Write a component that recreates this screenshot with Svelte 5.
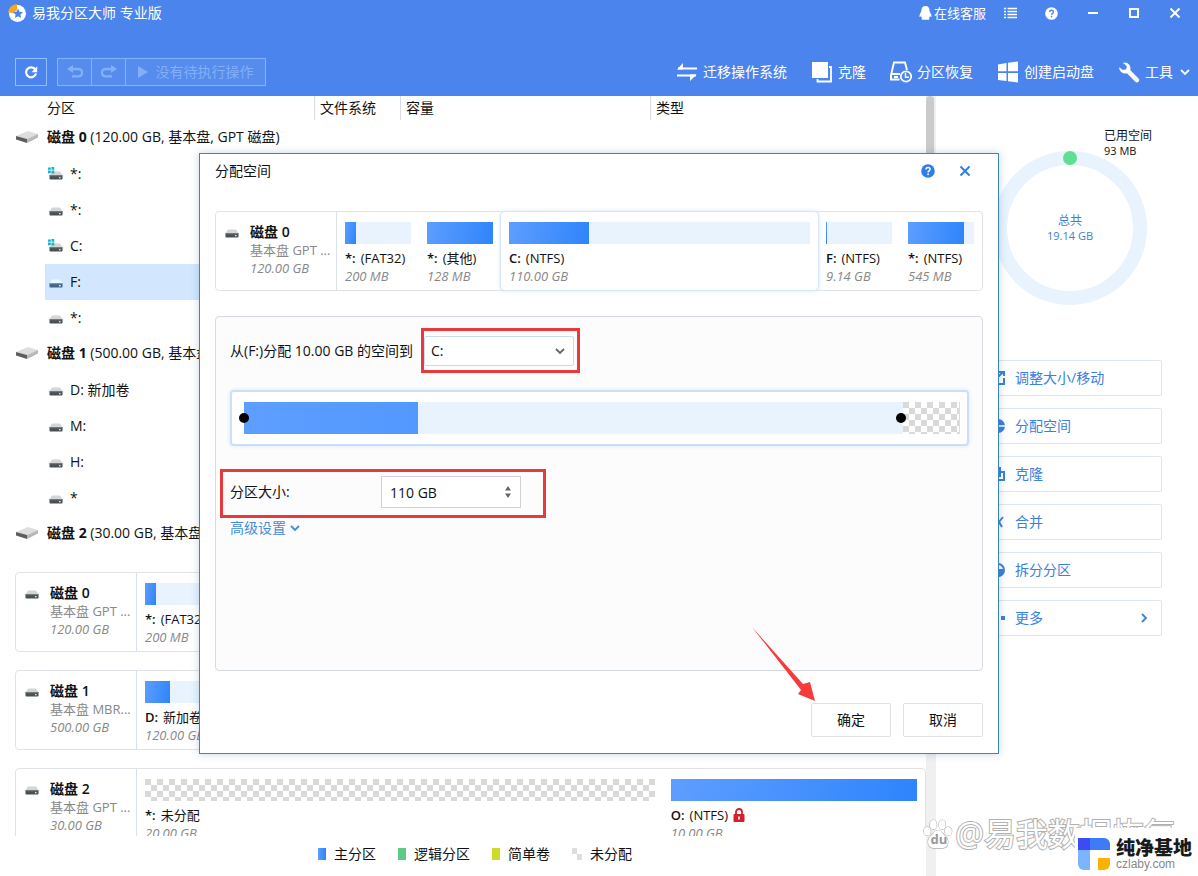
<script lang="ts">
  type Segment = {
    letter: string;
    fs: string;
    size: string;
    used: number;
    grow?: number;
    selected?: boolean;
    unallocated?: boolean;
    locked?: boolean;
  };
  type Disk = { id: number; kind: string; size: string; segments: Segment[] };
  type TreeRow = { label: string; disk?: string; system?: boolean; active?: boolean };

  const tree: TreeRow[] = [
    { disk: '磁盘 0', label: '(120.00 GB, 基本盘, GPT 磁盘)' },
    { label: '*:', system: true },
    { label: '*:' },
    { label: 'C:', system: true },
    { label: 'F:', active: true },
    { label: '*:' },
    { disk: '磁盘 1', label: '(500.00 GB, 基本盘, MBR 磁盘)' },
    { label: 'D: 新加卷' },
    { label: 'M:' },
    { label: 'H:' },
    { label: '*' },
    { disk: '磁盘 2', label: '(30.00 GB, 基本盘, GPT 磁盘)' }
  ];

  const disk0: Disk = {
    id: 0,
    kind: '基本盘 GPT ...',
    size: '120.00 GB',
    segments: [
      { letter: '*:', fs: '(FAT32)', size: '200 MB', used: 16 },
      { letter: '*:', fs: '(其他)', size: '128 MB', used: 100 },
      { letter: 'C:', fs: '(NTFS)', size: '110.00 GB', used: 26.5, grow: 1, selected: true },
      { letter: 'F:', fs: '(NTFS)', size: '9.14 GB', used: 1.5 },
      { letter: '*:', fs: '(NTFS)', size: '545 MB', used: 85 }
    ]
  };

  const disks: Disk[] = [
    { ...disk0, segments: disk0.segments.map((s) => ({ ...s, selected: false })) },
    {
      id: 1,
      kind: '基本盘 MBR...',
      size: '500.00 GB',
      segments: [
        { letter: 'D:', fs: '新加卷 (NTFS)', size: '120.00 GB', used: 10, grow: 1 },
        { letter: 'M:', fs: '(NTFS)', size: '180.00 GB', used: 8, grow: 1 },
        { letter: 'H:', fs: '(NTFS)', size: '199.00 GB', used: 8, grow: 1 }
      ]
    },
    {
      id: 2,
      kind: '基本盘 GPT ...',
      size: '30.00 GB',
      segments: [
        { letter: '*:', fs: '未分配', size: '20.00 GB', used: 0, grow: 2.07, unallocated: true },
        { letter: 'O:', fs: '(NTFS)', size: '10.00 GB', used: 100, grow: 1, locked: true }
      ]
    }
  ];

  const tools = [
    { icon: 'migrate', label: '迁移操作系统' },
    { icon: 'clone', label: '克隆' },
    { icon: 'recover', label: '分区恢复' },
    { icon: 'windows', label: '创建启动盘' },
    { icon: 'wrench', label: '工具' }
  ];

  const actions = [
    { icon: 'resize', label: '调整大小/移动' },
    { icon: 'allocate', label: '分配空间' },
    { icon: 'clone', label: '克隆' },
    { icon: 'merge', label: '合并' },
    { icon: 'split', label: '拆分分区' },
    { icon: 'more', label: '更多' }
  ];

  const legend = [
    { type: 'primary', label: '主分区' },
    { type: 'logical', label: '逻辑分区' },
    { type: 'simple', label: '简单卷' },
    { type: 'free', label: '未分配' }
  ];

  let target = 'C:';
  let size = '110 GB';
</script>

{#snippet drive(system: boolean)}
  <svg class="drive" width="16" height="16" viewBox="0 0 16 16" aria-hidden="true">
    <path d="M4 5.500h8l2.500 4H1.500z" fill="#d3d5d6" />
    <rect x="1.500" y="9" width="13" height="4.500" rx="0.800" fill="#4a5154" />
    <rect x="1.500" y="9" width="13" height="1.200" fill="#737a7c" />
    <rect x="11" y="11" width="1.500" height="1.300" fill="#e4f0e8" />
    {#if system}
      <path d="M0 1.500h2.800v2.300H0zM3.500 1h2.800v2.800H3.500zM0 4.600h2.800v2.600H0zM3.500 4.600h2.800v2.800H3.500z" fill="#18b4cc" />
    {/if}
  </svg>
{/snippet}

{#snippet help(box: number)}
  <svg width={box} height={box} viewBox="0 0 14 14" aria-hidden="true">
    <circle cx="7" cy="7" r="6.800" fill="currentColor" />
    <path d="M5 5.500C5 2.800 9.100 2.800 9.100 5.300 9.100 6.800 7.100 6.900 7.100 8.400" class="help-stroke" fill="none" stroke-width="1.500" />
    <rect x="6.300" y="9.500" width="1.600" height="1.600" class="help-dot" />
  </svg>
{/snippet}

{#snippet chevron()}
  <svg width="10" height="8" viewBox="0 0 10 8" aria-hidden="true">
    <path d="M1 2l4 4 4-4" fill="none" stroke="currentColor" stroke-width="1.800" />
  </svg>
{/snippet}

{#snippet diskCard(disk: Disk)}
  <article class="disk-card">
    <div class="disk-info">
      {@render drive(false)}
      <div class="disk-text">
        <strong>磁盘 <span>{disk.id}</span></strong>
        <span class="kind">{disk.kind}</span>
        <em>{disk.size}</em>
      </div>
    </div>
    {#each disk.segments as seg}
      <div class="segment" class:selected={seg.selected} style:flex={seg.grow ? `${seg.grow} 1 0` : '0 0 82px'}>
        <div class="bar" class:checker={seg.unallocated}>
          {#if seg.used > 0}<div class="fill" style:width={`${seg.used}%`}></div>{/if}
        </div>
        <div class="seg-label">
          <b>{seg.letter}</b>
          <span>{seg.fs}</span>
          {#if seg.locked}
            <svg width="12" height="14" viewBox="0 0 12 14" aria-hidden="true">
              <path d="M3 7V4a3 3 0 0 1 6 0v3" fill="none" stroke="#d61f2b" stroke-width="1.800" />
              <rect x="0.500" y="6" width="11" height="8" rx="1" fill="#d61f2b" />
              <rect x="5.200" y="8.500" width="1.600" height="3" fill="#fff" />
            </svg>
          {/if}
        </div>
        <em>{seg.size}</em>
      </div>
    {/each}
  </article>
{/snippet}

<div class="app">
  <header>
    <div class="titlebar">
      <svg width="19" height="19" viewBox="0 0 19 19" aria-hidden="true">
        <circle cx="9.500" cy="9.500" r="8.500" fill="#fff" />
        <path d="M0 8.500A9.500 9.500 0 0 1 9 0v6L5.500 9z" fill="#f5a623" />
        <path d="M10 4.500l1.500 3.300 3.500.400-2.600 2.400.700 3.500-3.100-1.800-3.100 1.800.700-3.500L5 8.200l3.500-.400z" fill="#4b84ec" />
      </svg>
      <h1>易我分区大师 专业版</h1>
      <a class="service" href="#service">
        <svg width="13" height="14" viewBox="0 0 13 14" aria-hidden="true">
          <path d="M6.500 0C3.800 0 2.300 2 2.400 4.500 2.400 6 .300 8 .400 10.800c.500.400 1.100-.300 1.500-.900.200.900.700 1.600 1.300 2.100-1 .300-.900 1.800.400 1.800h5.800c1.300 0 1.400-1.500.400-1.800.600-.500 1.100-1.200 1.300-2.100.400.600 1 1.300 1.500.9.100-2.800-2.100-4.800-2.100-6.300C10.600 2 9.200 0 6.500 0z" fill="#fff" />
        </svg>
        在线客服
      </a>
      <div class="win-buttons">
        <button aria-label="菜单">
          <svg width="14" height="12" viewBox="0 0 14 12"><path d="M0 1.500h2M3.500 1.500H13M0 4.500h2M3.500 4.500H13M0 7.500h2M3.500 7.500H13M0 10.500h2M3.500 10.500H13" stroke="#fff" stroke-width="1.500" /></svg>
        </button>
        <button aria-label="帮助">{@render help(13)}</button>
        <button aria-label="最小化">
          <svg width="10" height="10" viewBox="0 0 10 10"><path d="M0 5h10" stroke="#fff" stroke-width="2" /></svg>
        </button>
        <button aria-label="最大化">
          <svg width="10" height="10" viewBox="0 0 10 10"><rect x="1" y="1" width="8" height="8" fill="none" stroke="#fff" stroke-width="2" /></svg>
        </button>
        <button aria-label="关闭">
          <svg width="10" height="10" viewBox="0 0 10 10"><path d="M.500.500l9 9M9.500.500l-9 9" stroke="#fff" stroke-width="2" /></svg>
        </button>
      </div>
    </div>

    <div class="toolbar">
      <button class="refresh" aria-label="刷新">
        <svg width="14" height="14" viewBox="0 0 14 14"><path d="M11.300 4.500A5 5 0 1 0 12 8.500" fill="none" stroke="#fff" stroke-width="2.200" /><path d="M13.200 1.200v6H7.400z" fill="#fff" /></svg>
      </button>
      <div class="history">
        <button aria-label="撤销" disabled>
          <svg width="16" height="14" viewBox="0 0 16 14"><path d="M3 4h8.500a3.700 3.700 0 0 1 0 7.400H5" fill="none" stroke="currentColor" stroke-width="2.400" /><path d="M6 0v8L0 4z" fill="currentColor" /></svg>
        </button>
        <button aria-label="重做" disabled>
          <svg width="16" height="14" viewBox="0 0 16 14"><path d="M13 4H4.500a3.700 3.700 0 0 0 0 7.400H11" fill="none" stroke="currentColor" stroke-width="2.400" /><path d="M10 0v8l6-4z" fill="currentColor" /></svg>
        </button>
        <button class="pending" disabled>
          <svg width="10" height="12" viewBox="0 0 10 12" aria-hidden="true"><path d="M0 0l10 6-10 6z" fill="currentColor" /></svg>
          没有待执行操作
        </button>
      </div>
      <nav>
        {#each tools as tool}
          <button>
            <svg width="22" height="22" viewBox="0 0 22 22" aria-hidden="true">
              {#if tool.icon === 'migrate'}
                <path d="M2 7.500h19M1 14.500h19" stroke="#fff" stroke-width="2" /><path d="M1 8.500L7 2v6.500zM20.500 13.500L14 20v-6.500z" fill="#fff" />
              {:else if tool.icon === 'clone'}
                <path d="M18 6h2v14.500H6.500V18" fill="none" stroke="#fff" stroke-width="1.800" /><rect x="1" y="1" width="16" height="16" fill="#fff" />
              {:else if tool.icon === 'recover'}
                <path d="M9.500 18.500H1V14L4 1.500h11L17 9M1.500 13H10M4 16h4" fill="none" stroke="#fff" stroke-width="1.900" /><circle cx="16" cy="15.500" r="5.200" fill="none" stroke="#fff" stroke-width="1.700" /><path d="M15.500 12v4.200h3.500" fill="none" stroke="#fff" stroke-width="1.400" />
              {:else if tool.icon === 'windows'}
                <path d="M1 3.500L9.500 2v8.200H1zM11 1.800L21 .500v9.700H11zM1 12h8.500v8L1 19zM11 12h10v9.500L11 20.300z" fill="#fff" />
              {:else}
                <path d="M6.500 1.500A5.800 5.800 0 0 1 12.200 9l8.300 8.500a2.200 2.200 0 0 1-3.200 3.200L9 12.200A5.800 5.800 0 0 1 1.300 6.200l3.500 2.900 3.400-.900.600-3.200L5 2z" fill="#fff" />
              {/if}
            </svg>
            <span>{tool.label}</span>
            {#if tool.icon === 'wrench'}<span class="caret">{@render chevron()}</span>{/if}
          </button>
        {/each}
      </nav>
    </div>
  </header>

  <main>
    <div class="left">
      <div class="tree-pane">
        <table>
          <thead>
            <tr><th class="col-name">分区</th><th class="col-fs">文件系统</th><th class="col-size">容量</th><th>类型</th></tr>
          </thead>
          <tbody>
            {#each tree as row}
              <tr>
                <td colspan="4">
                  {#if row.disk}
                    <div class="disk-row">
                      <svg width="22" height="12" viewBox="0 0 22 12" aria-hidden="true">
                        <path d="M0 5L12 0l10 3-11 5.500z" fill="#dedede" /><path d="M0 5l11 3v4L0 8.500z" fill="#5c5f60" /><path d="M11 8.200L22 3v3.500L11 12z" fill="#b5b7b8" />
                      </svg>
                      <span><strong>{row.disk}</strong> {row.label}</span>
                    </div>
                  {:else}
                    <div class="part-row" class:active={row.active}>{@render drive(!!row.system)}<span>{row.label}</span></div>
                  {/if}
                </td>
              </tr>
            {/each}
          </tbody>
        </table>
      </div>
      <div class="map-pane">
        {#each disks as disk}
          {@render diskCard(disk)}
        {/each}
      </div>
      <ul class="legend">
        {#each legend as item}
          <li><i class={item.type}></i>{item.label}</li>
        {/each}
      </ul>
    </div>

    <div class="scrollbar"><div class="thumb"></div></div>

    <aside>
      <div class="donut">
        <svg width="156" height="164" viewBox="0 0 156 164" aria-hidden="true">
          <circle cx="78" cy="86" r="70" fill="none" stroke="#e8f3fe" stroke-width="14" />
          <circle cx="78" cy="16" r="7" fill="#5fdf93" />
        </svg>
        <p class="used">已用空间<br /><span>93 MB</span></p>
        <p class="total">总共<br /><span>19.14 GB</span></p>
      </div>
      <div class="actions">
        {#each actions as action}
          <button>
            <svg width="16" height="16" viewBox="0 0 16 16" aria-hidden="true" fill="none" stroke="currentColor" stroke-width="2">
              {#if action.icon === 'resize'}
                <path d="M7 3H2v11h13V8M7 9l7-7M10 2h5v4" />
              {:else if action.icon === 'allocate'}
                <circle cx="9" cy="8" r="7" fill="currentColor" stroke="none" /><path d="M8 8h8M8 8V1" stroke="#fff" stroke-width="1.500" />
              {:else if action.icon === 'clone'}
                <path d="M11 6h4v8H6v-2" /><rect x="1" y="1" width="11" height="10" fill="currentColor" stroke="none" />
              {:else if action.icon === 'merge'}
                <path d="M3 2l4 6-4 6M14 3L10 8l3 5" />
              {:else if action.icon === 'split'}
                <circle cx="9" cy="8" r="6" /><path d="M3 8h12" /><path d="M3 9h12a6 6 0 0 1-12 0z" fill="currentColor" stroke="none" />
              {:else}
                <path d="M0 8h4M6 8h4M12 8h4" stroke-width="4" />
              {/if}
            </svg>
            <span>{action.label}</span>
            {#if action.icon === 'more'}
              <svg class="arrow-right" width="8" height="10" viewBox="0 0 8 10" aria-hidden="true"><path d="M2 1l4 4-4 4" fill="none" stroke="currentColor" stroke-width="1.800" /></svg>
            {/if}
          </button>
        {/each}
      </div>
    </aside>
  </main>

  <div class="overlay">
    <div class="dialog" role="dialog" aria-labelledby="dialog-title">
      <div class="dialog-head">
        <h2 id="dialog-title">分配空间</h2>
        <button aria-label="帮助">{@render help(14)}</button>
        <button aria-label="关闭">
          <svg width="12" height="12" viewBox="0 0 12 12"><path d="M1.500 1.500l9 9M10.500 1.500l-9 9" stroke="currentColor" stroke-width="2" /></svg>
        </button>
      </div>

      {@render diskCard(disk0)}

      <div class="settings">
        <div class="target-row">
          <label for="target">从(F:)分配 10.00 GB 的空间到</label>
          <div class="mark mark-select">
            <div class="select">
              <select id="target" bind:value={target}>
                <option>C:</option>
              </select>
              {@render chevron()}
            </div>
          </div>
        </div>

        <div class="slider">
          <div class="track">
            <div class="track-fill"></div>
            <div class="checker track-free"></div>
            <i class="handle start"></i>
            <i class="handle end"></i>
          </div>
        </div>

        <div class="mark mark-size">
          <label for="size">分区大小:</label>
          <div class="spin">
            <input id="size" type="text" bind:value={size} />
            <svg width="8" height="14" viewBox="0 0 8 14" aria-hidden="true"><path d="M4 1l3 4.500H1zM4 13L1 8.500h6z" fill="#666" /></svg>
          </div>
        </div>
        <a class="advanced" href="#advanced">高级设置 {@render chevron()}</a>
      </div>

      <div class="dialog-foot">
        <button>确定</button>
        <button>取消</button>
      </div>
      <svg class="pointer" width="64" height="75" viewBox="0 0 64 75" aria-hidden="true">
        <path d="M0 0L51 57l7-2 5 19-17-7 3-4z" fill="#f73a3a" />
      </svg>
    </div>
  </div>

  <div class="watermark">
    <svg width="30" height="32" viewBox="0 0 32 32" aria-hidden="true" fill="#fff" stroke="#aaa" stroke-width="1.200">
      <ellipse cx="11" cy="6" rx="3.600" ry="5" /><ellipse cx="20.500" cy="6" rx="3.600" ry="5" /><ellipse cx="4.500" cy="13" rx="3.700" ry="4.500" /><ellipse cx="27" cy="13" rx="3.700" ry="4.500" />
      <path d="M16 12c-4 0-5 4-8 6.500C4 22 4.500 31 11 31c3 0 7 0 10 0 6.500 0 7-9 3-12.500C21 16 20 12 16 12z" />
      <text x="8" y="27">du</text>
    </svg>
    <span>@易我数据恢复</span>
  </div>
  <div class="brand">
    <svg width="32" height="32" viewBox="0 0 32 32" aria-hidden="true">
      <path d="M0 0h12v12H0z" fill="#3b4bf5" /><path d="M12 0h14a6 6 0 0 1 6 6v6H12z" fill="#3d7bf7" /><path d="M0 12h12v20H6a6 6 0 0 1-6-6z" fill="#7cb5fd" /><path d="M20 20h12v6a6 6 0 0 1-6 6h-6z" fill="#fdb103" />
    </svg>
    <div><b>纯净基地</b><span>czlaby.com</span></div>
  </div>
</div>

<style>
  :global(body) {
    font-family: 'Open Sans', 'Noto Sans CJK SC', sans-serif;
    font-size: 14px;
    line-height: 20px;
    color: #111;
  }
  .app {
    position: relative;
    display: flex;
    flex-direction: column;
    height: 100vh;
    overflow: hidden;
    background: #fff;
  }
  button, input, select { font: inherit; color: inherit; }
  button { padding: 0; border: none; background: none; }
  h1, h2, p, ul { margin: 0; padding: 0; font-size: 14px; font-weight: 400; }
  svg { flex: none; }

  header { background: #4b84ec; color: #fff; height: 96px; flex: none; }
  .titlebar {
    display: flex;
    align-items: center;
    height: 26px;
    padding: 0 3px 0 8px;
  }
  .titlebar h1 { flex: 1; margin-left: 5px; }
  .service {
    display: flex;
    align-items: center;
    gap: 2px;
    font-size: 13px;
    color: #fff;
    text-decoration: none;
  }
  .win-buttons { display: flex; margin-left: 4px; }
  .win-buttons button {
    display: flex;
    align-items: center;
    justify-content: center;
    width: 41px;
    height: 24px;
  }
  .help-stroke { stroke: #4b84ec; }
  .help-dot { fill: #4b84ec; }
  .dialog .help-stroke { stroke: #fff; }
  .dialog .help-dot { fill: #fff; }

  .toolbar {
    display: flex;
    align-items: center;
    margin-top: 32px;
    height: 28px;
    padding: 0 8px 0 15px;
  }
  .toolbar button { display: flex; align-items: center; justify-content: center; }
  .refresh {
    width: 32px;
    height: 28px;
    border: 1px solid #8fc0fb;
  }
  .history { display: flex; margin-left: 10px; border: 1px solid #7fb2f8; background: #568cee; }
  .history button { width: 33px; height: 26px; color: #82aff6; }
  .history button + button { border-left: 1px solid #7fb2f8; width: 34px; }
  .history .pending.pending { width: 140px; gap: 8px; }
  nav { display: flex; gap: 24px; margin-left: auto; }
  .toolbar nav button { gap: 5px; }
  .caret { display: flex; margin-left: 2px; }

  main { display: flex; flex: 1; min-height: 0; }
  .left { display: flex; flex-direction: column; flex: 1; min-width: 0; }
  .tree-pane { flex: 0 0 466px; overflow: hidden; }
  table { width: 100%; border-collapse: collapse; table-layout: fixed; }
  th {
    height: 24px;
    padding: 0 0 0 5px;
    font-weight: 400;
    text-align: left;
    border-left: 1px solid #ddd;
  }
  th.col-name { width: 267px; padding-left: 47px; border: none; }
  th.col-fs { width: 80px; }
  th.col-size { width: 244px; }
  td { padding: 0; }
  .disk-row, .part-row { display: flex; align-items: center; white-space: nowrap; }
  .disk-row { height: 34px; padding: 0 0 2px 16px; gap: 9px; }
  .part-row { height: 36px; margin-left: 45px; padding-left: 3px; gap: 6px; }
  .active { background: #d2e7fd; }
  .active :global(.drive) { filter: sepia(1) hue-rotate(170deg) saturate(2); }

  .map-pane {
    display: flex;
    flex-direction: column;
    flex: 1;
    gap: 18px;
    min-height: 0;
    margin-top: 10px;
    padding-left: 15px;
    overflow: hidden;
  }
  .disk-card {
    display: flex;
    flex: none;
    height: 80px;
    box-sizing: border-box;
    border: 1px solid #dfe3e8;
    border-radius: 4px;
    background: #fff;
  }
  .disk-info {
    display: flex;
    gap: 10px;
    width: 121px;
    box-sizing: border-box;
    padding: 11px 0 0 8px;
    border-right: 1px solid #d8e0ea;
    font-size: 13px;
    line-height: 18px;
    white-space: nowrap;
  }
  .disk-info :global(.drive) { margin-top: 1px; }
  .disk-text { display: flex; flex-direction: column; }
  .disk-text strong { font-size: 14px; }
  .disk-text strong span { font-weight: 600; }
  .kind { color: #888; }
  em { font-size: 13px; line-height: 18px; color: #888; white-space: nowrap; }
  .segment {
    display: flex;
    flex-direction: column;
    box-sizing: border-box;
    min-width: 0;
    padding: 10px 8px 0;
  }
  .selected {
    border-radius: 4px;
    box-shadow: 0 0 0 1px #d8e6fa, 0 0 4px 1px #dbe7f9;
  }
  .bar { height: 22px; margin-bottom: 5px; background: #e8f3fe; }
  .fill { height: 100%; background: linear-gradient(100deg, #5e9eff, #2e84fc); }
  .checker {
    background: repeating-conic-gradient(#fff 0 25%, #d9d9d9 0 50%) 0 0 / 12px 12px;
  }
  .seg-label {
    display: flex;
    align-items: center;
    gap: 5px;
    height: 18px;
    font-size: 13px;
    white-space: nowrap;
  }
  .seg-label b { font-weight: 600; }

  .legend {
    display: flex;
    align-items: center;
    justify-content: center;
    gap: 22px;
    height: 40px;
    padding: 0 0 4px 24px;
    box-sizing: border-box;
    list-style: none;
  }
  .legend li { display: flex; align-items: center; gap: 8px; }
  .legend i { width: 8px; height: 12px; }
  .primary { background: linear-gradient(90deg, #5e9eff, #2e84fc); }
  .logical { background: #5ccb88; }
  .simple { background: #cddc2b; }
  .legend .free { width: 10px; background: repeating-conic-gradient(#fff 0 25%, #dedede 0 50%) 0 0 / 10px 12px; }

  .scrollbar { width: 10px; background: #f0f0f1; }
  .thumb { width: 8px; height: 460px; border-radius: 4px; background: #cbcbcb; }

  aside { width: 262px; box-sizing: border-box; padding: 46px 36px 0; }
  .donut { position: relative; width: 156px; margin-left: 20px; }
  .donut p { position: absolute; font-size: 12px; line-height: 15px; white-space: nowrap; }
  .donut p span { font-size: 11px; }
  .donut .used { top: -14px; left: 112px; }
  .donut .total { top: 71px; left: 0; right: 0; text-align: center; color: #3b7fd0; }
  .actions { display: flex; flex-direction: column; gap: 12px; margin-top: 49px; }
  .actions button {
    display: flex;
    align-items: center;
    gap: 10px;
    height: 36px;
    padding: 0 13px 0 16px;
    border: 1px solid #dde6f0;
    border-radius: 2px;
    color: #3a80de;
  }
  .arrow-right { margin-left: auto; }

  .overlay {
    position: absolute;
    inset: 0;
    display: flex;
    align-items: center;
    justify-content: center;
    padding-top: 31px;
  }
  .dialog {
    position: relative;
    width: calc(100% - 398px);
    box-sizing: border-box;
    padding: 0 15px 16px;
    border: 1px solid #3a86c0;
    background: #fff;
    box-shadow: 0 0 8px rgba(40, 90, 150, 0.25);
  }
  .dialog-head {
    display: flex;
    align-items: center;
    height: 34px;
    padding-right: 12px;
    gap: 24px;
    margin-bottom: 23px;
  }
  .dialog-head h2 { flex: 1; }
  .dialog-head button { display: flex; color: #2f7de8; }
  .settings {
    display: flex;
    flex-direction: column;
    align-items: flex-start;
    min-height: 355px;
    box-sizing: border-box;
    margin-top: 25px;
    padding: 11px 13px 0 4px;
    border: 1px solid #d5d9e0;
    border-radius: 4px;
    background: #fcfcfd;
  }
  .target-row { display: flex; align-items: center; gap: 8px; padding-left: 10px; }
  .mark { box-sizing: border-box; border: 3px solid #e83a3d; }
  .mark-select { padding: 5px 3px 4px 0; }
  .select, .spin { position: relative; display: flex; align-items: center; }
  .select { color: #666; }
  select {
    width: 150px;
    height: 30px;
    padding: 0 6px;
    border: 1px solid #c9dced;
    border-radius: 2px;
    background: #fff;
    appearance: none;
    color: #111;
  }
  .select :global(svg), .spin svg { position: absolute; right: 9px; pointer-events: none; }
  .slider {
    align-self: stretch;
    margin: 17px 0 23px 10px;
    padding: 10px 7px 10px 12px;
    border: 2px solid #cbdff8;
    border-radius: 4px;
    background: #fff;
    box-shadow: 0 0 4px #d6e6fb;
  }
  .track {
    position: relative;
    display: flex;
    justify-content: space-between;
    height: 32px;
    background: #e8f3fe;
  }
  .track-fill { width: 24.3%; background: linear-gradient(90deg, #5e9eff, #5298ff); }
  .track-free { width: 8%; box-sizing: border-box; border-right: 1px solid #ddd; }
  .handle {
    position: absolute;
    top: 11px;
    width: 10px;
    height: 10px;
    border-radius: 5px;
    background: #000;
  }
  .start { left: -5px; }
  .end { right: 54px; }
  .mark-size { display: flex; align-items: center; padding: 4px 22px 7px 7px; }
  .mark-size label { width: 151px; }
  input {
    width: 140px;
    height: 32px;
    box-sizing: border-box;
    padding: 0 8px;
    border: 1px solid #ccd2d8;
    background: #fff;
  }
  .advanced {
    display: flex;
    align-items: center;
    gap: 4px;
    margin-left: 10px;
    color: #3f8ddb;
    text-decoration: none;
  }
  .dialog-foot { display: flex; justify-content: flex-end; gap: 12px; margin-top: 32px; }
  .dialog-foot button {
    width: 80px;
    height: 34px;
    border: 1px solid #dfe2e6;
    border-radius: 2px;
    background: #fff;
  }
  .pointer { position: absolute; right: 182px; bottom: 51px; }

  .watermark {
    position: absolute;
    right: 22px;
    bottom: 22px;
    display: flex;
    align-items: center;
    gap: 2px;
    font-size: 32px;
    line-height: 40px;
    color: #fff;
    -webkit-text-stroke: 2px #b0b0b0;
    paint-order: stroke fill;
  }
  .watermark text {
    font-size: 14px;
    font-weight: 700;
    fill: #999;
    stroke: none;
    -webkit-text-stroke: 0;
  }
  .brand {
    position: absolute;
    right: 0;
    bottom: 0;
    display: flex;
    align-items: center;
    gap: 6px;
    box-sizing: border-box;
    height: 48px;
    padding: 4px 6px 0 3px;
    background: #fff;
  }
  .brand div { display: flex; flex-direction: column; }
  .brand b { font-size: 19px; line-height: 20px; font-weight: 900; color: #1a1a1a; }
  .brand span {
    font-family: 'Liberation Sans', Arial, sans-serif;
    font-size: 12px;
    line-height: 12px;
    color: #888;
  }
</style>
